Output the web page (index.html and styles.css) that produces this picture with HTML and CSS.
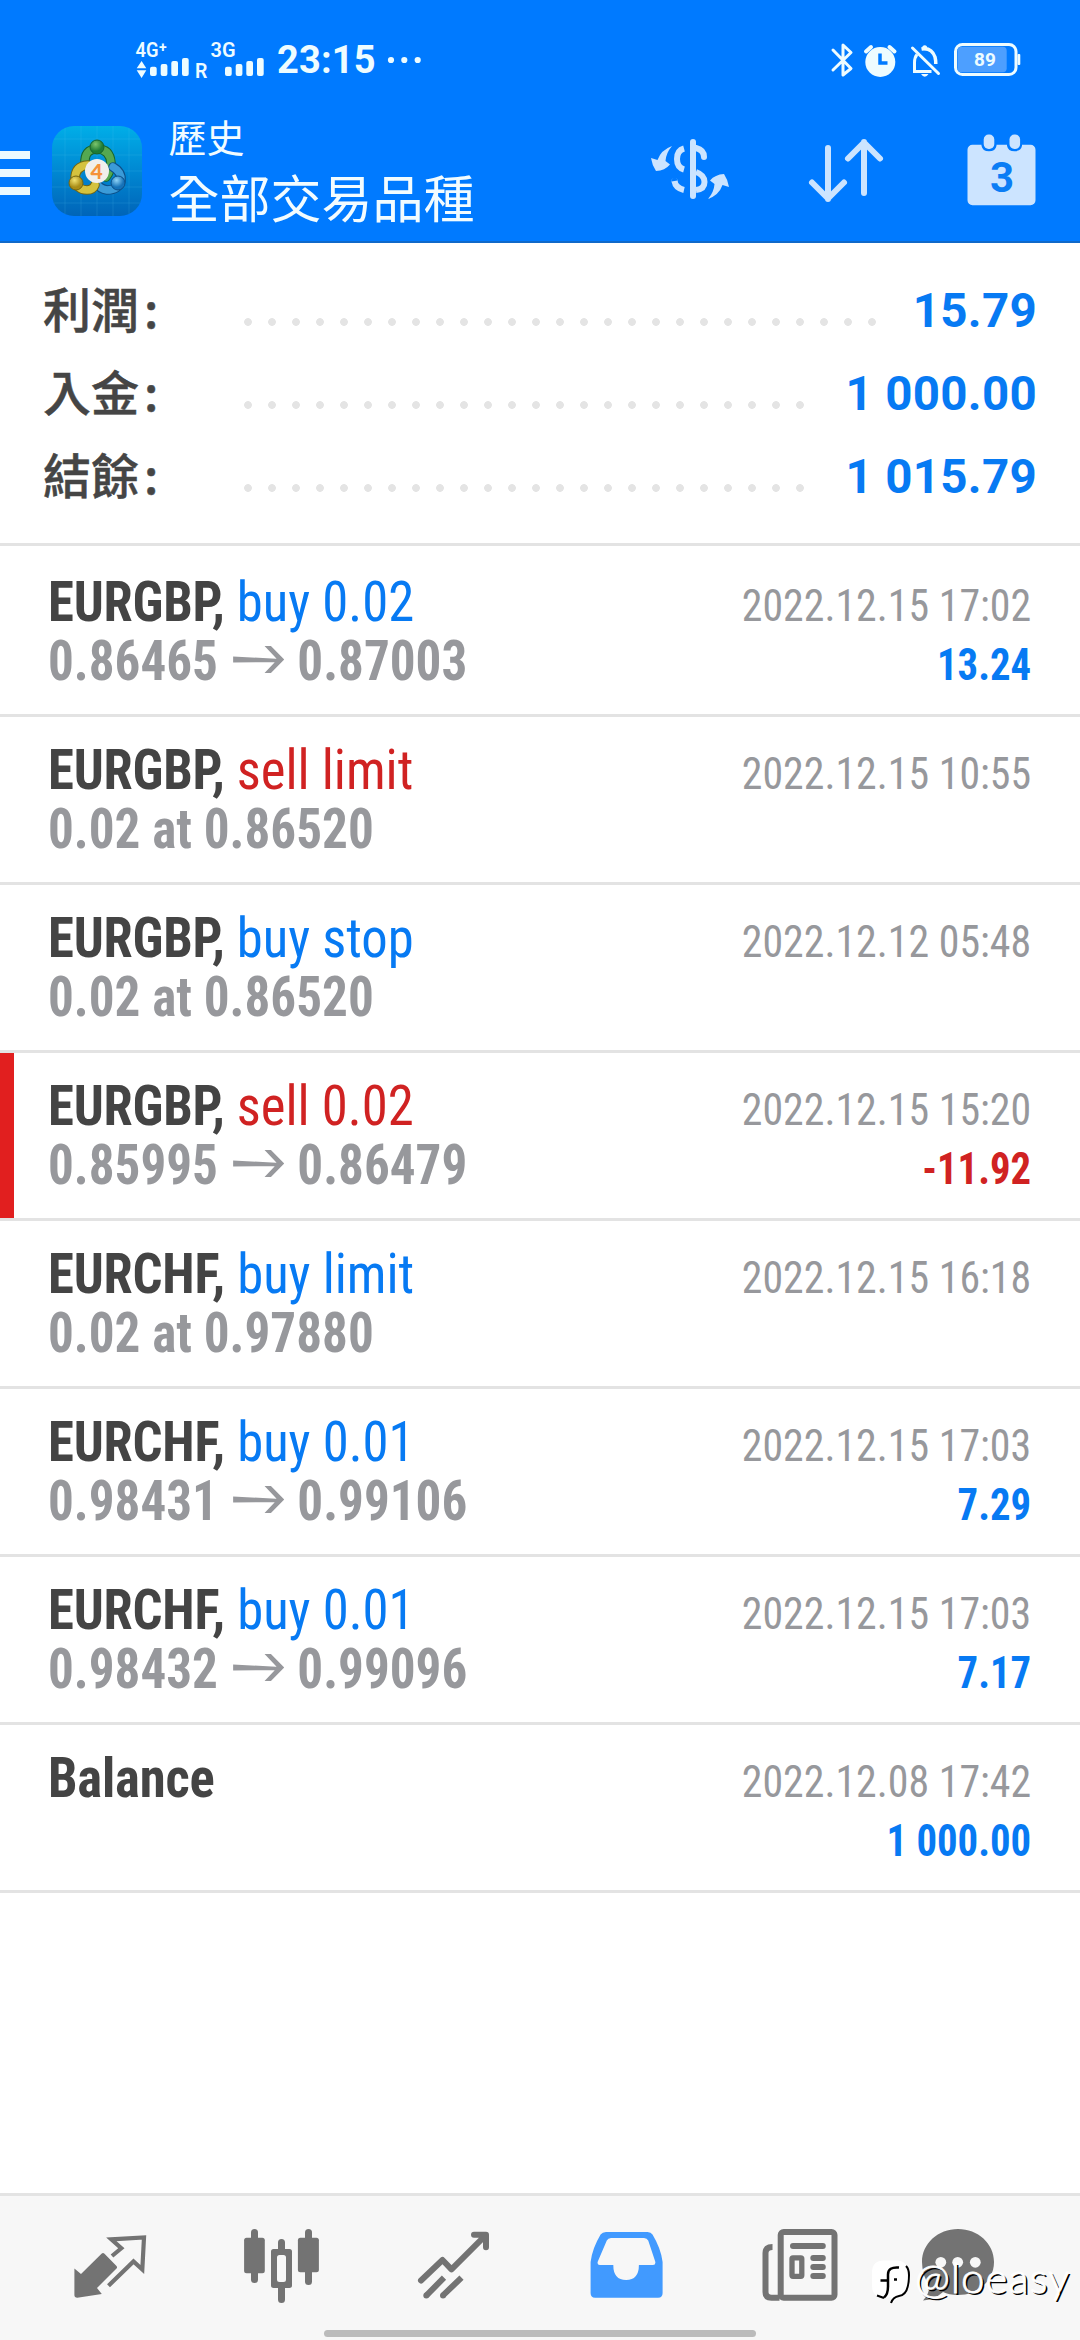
FILE: index.html
```html
<!DOCTYPE html>
<html lang="zh-Hant">
<head>
<meta charset="utf-8">
<title>歷史</title>
<link rel="stylesheet" href="styles.css">
</head>
<body>
<header class="top">
  <div class="status">
    <svg class="status-svg" viewBox="0 0 1080 104" width="1080" height="104">
      <g fill="#eefcff" font-family="Roboto, sans-serif">
        <text x="135.5" y="56.7" font-size="20" font-weight="600" textLength="23" lengthAdjust="spacingAndGlyphs">4G</text>
        <text x="159" y="52" font-size="14" font-weight="700">+</text>
        <text x="210.5" y="56.7" font-size="20" font-weight="600" textLength="25" lengthAdjust="spacingAndGlyphs">3G</text>
        <text x="195" y="77.5" font-size="19.5" font-weight="600">R</text>
        <path d="M136.7 68.3h9.6L141.6 61zM136.7 70.3h9.6L141.6 78z"/>
        <rect x="150" y="66.7" width="6.7" height="9.3" rx="2"/><rect x="160.7" y="64" width="6.7" height="12" rx="2"/><rect x="171.3" y="61" width="6.7" height="15" rx="2"/><rect x="182" y="58" width="6.7" height="18" rx="2"/>
        <rect x="225" y="66.7" width="6.7" height="9.3" rx="2"/><rect x="235.7" y="64" width="6.7" height="12" rx="2"/><rect x="246.3" y="61" width="6.7" height="15" rx="2"/><rect x="257" y="58" width="6.7" height="18" rx="2"/>
        <text x="277" y="73.3" font-size="38" font-weight="700" textLength="98.5" lengthAdjust="spacing">23:15</text>
        <circle cx="391" cy="60" r="3.1"/><circle cx="404.3" cy="60" r="3.1"/><circle cx="417.7" cy="60" r="3.1"/>
        <path d="M833 50l18 18.5-8 6.5V45l8 7.5L833 70" fill="none" stroke="#eefcff" stroke-width="3" stroke-linecap="round" stroke-linejoin="round"/>
        <circle cx="880.3" cy="62" r="15"/>
        <path d="M866 51.5l5-4.5M889.500 47l5 4.500" stroke="#eefcff" stroke-width="4" stroke-linecap="round"/>
        <path d="M880 53.500v9.500h7.500" fill="none" stroke="#007aff" stroke-width="3.500"/>
        <path d="M912.500 48l26 25.500" stroke="#eefcff" stroke-width="3" stroke-linecap="round"/>
        <path d="M917 54.500q-2.500 3-2.500 8V71.500h17" fill="none" stroke="#eefcff" stroke-width="3"/>
        <path d="M921.500 49q10-2 13.500 8 .8 3 .8 7" fill="none" stroke="#eefcff" stroke-width="3.500"/>
        <circle cx="924.700" cy="47.800" r="2.500"/>
        <path d="M921 74h7.500q-3.700 5.500-7.500 0z"/>
        <rect x="955.500" y="44.500" width="60.500" height="30" rx="7" fill="none" stroke="#eefcff" stroke-width="3"/>
        <rect x="957.500" y="46.700" width="49.200" height="25.500" rx="4" fill="#4d9fff"/>
        <rect x="1017.500" y="54" width="2.800" height="11" rx="1"/>
        <text x="985" y="66" font-size="19" font-weight="700" text-anchor="middle">89</text>
      </g>
    </svg>
  </div>
  <div class="bar">
    <div class="burger"><i></i><i></i><i></i></div>
    <svg class="logo" viewBox="0 0 90 90" width="90" height="90">
      <defs>
        <linearGradient id="bg" x1="0" y1="0" x2="0" y2="1"><stop offset="0" stop-color="#00aee8"/><stop offset=".5" stop-color="#0088d2"/><stop offset="1" stop-color="#0064b8"/></linearGradient>
        <radialGradient id="gg" cx=".4" cy=".3"><stop offset="0" stop-color="#7cc46c"/><stop offset="1" stop-color="#1e7c35"/></radialGradient>
        <radialGradient id="yg" cx=".4" cy=".3"><stop offset="0" stop-color="#f2e372"/><stop offset="1" stop-color="#a98d17"/></radialGradient>
        <radialGradient id="lg" cx=".4" cy=".3"><stop offset="0" stop-color="#8fd3f7"/><stop offset="1" stop-color="#1672b8"/></radialGradient>
      </defs>
      <rect width="90" height="90" rx="22" fill="url(#bg)"/>
      <path d="M13 2v86M29 0v90M45 0v90M61 0v90M77 2v86M2 13h86M0 29h90M0 45h90M0 61h90M2 77h86" stroke="#5cc4f4" stroke-opacity=".16" fill="none"/>
      <g fill="none" stroke-linecap="round">
        <path d="M33 38q-1-15 12-15t14 14q0 8-5 14" stroke="#17642c" stroke-width="9.500"/><path d="M33 38q-1-15 12-15t14 14q0 8-5 14" stroke="#54a851" stroke-width="7.500"/>
        <path d="M61 41q9 5 8 14-3 9-14 9-7-1-11-7" stroke="#0d4f88" stroke-width="9.500"/><path d="M61 41q9 5 8 14-3 9-14 9-7-1-11-7" stroke="#3b9bd8" stroke-width="7.500"/>
        <path d="M36 39q-13 1-13 14 2 11 12 11 6 0 8-5" stroke="#746510" stroke-width="9.500"/><path d="M36 39q-13 1-13 14 2 11 12 11 6 0 8-5" stroke="#d4c23e" stroke-width="7.500"/>
      </g>
      <circle cx="45" cy="21" r="7" fill="url(#gg)" stroke="#17642c"/>
      <circle cx="24" cy="57" r="7" fill="url(#yg)" stroke="#746510"/>
      <circle cx="66" cy="57" r="7" fill="url(#lg)" stroke="#0d4f88"/>
      <circle cx="45" cy="45" r="12" fill="#f1efec"/>
      <text x="44.500" y="52.500" text-anchor="middle" font-family="Lato, sans-serif" font-weight="900" font-size="21" fill="#f5923a">4</text>
    </svg>
    <div class="titles"><div class="t1">歷史</div><div class="t2">全部交易品種</div></div>
    <svg class="actions" viewBox="640 120 400 100" width="400" height="100">
      <g fill="none" stroke="#cce4ff" stroke-width="6" stroke-linecap="round" stroke-linejoin="round">
        <path d="M693 142v54"/>
        <path d="M696 148q8 2 8 9" /><path d="M684 148.500q-7 2-7 10.500t7 10.500" stroke-linecap="butt"/>
        <path d="M696 172q8.500 3 8.500 10t-8.500 8" stroke-linecap="butt"/><path d="M674.500 181q1 7 9.500 9" stroke-linecap="butt"/><circle cx="674.600" cy="181" r=".1"/>
        <path d="M828 148v51M812 182.500l16 16 16-16M864 193v-51M848 158.500l16-16 16 16"/>
      </g>
      <g fill="#cce4ff">
        <path d="M672 146q-6 7-6.500 15l4.500 3.500q-5 6-14 6.500-4-6-5-13l6.500 2q3.500-10 14.500-14z"/>
        <path d="M708 199q6-7 6.500-15l-4.500-3.500q5-6 14-6.500 4 6 5 13l-6.500-2q-3.500 10-14.500 14z"/>
        <path d="M973 144.700h8.500v1q1 5.500 7.500 5.500t7.500-5.500v-1h10.500v1q1 5.500 7.500 5.500t7.500-5.500v-1h8.500a5 5 0 0 1 5 5v50.500a5 5 0 0 1-5 5h-58a5 5 0 0 1-5-5v-50.500a5 5 0 0 1 5-5z"/>
        <rect x="983.700" y="134.500" width="10.600" height="14.500" rx="5"/><rect x="1009.500" y="134.500" width="10.600" height="14.500" rx="5"/>
      </g>
      <text x="1002" y="192" text-anchor="middle" font-family="Roboto, sans-serif" font-weight="700" font-size="42" fill="#0b7df5">3</text>
    </svg>
  </div>
</header>

<section class="summary">
  <div class="sum"><span class="lab">利潤<i>:</i></span><span class="dots"></span><span class="val">15.79</span></div>
  <div class="sum"><span class="lab">入金<i>:</i></span><span class="dots"></span><span class="val">1 000.00</span></div>
  <div class="sum"><span class="lab">結餘<i>:</i></span><span class="dots"></span><span class="val">1 015.79</span></div>
</section>

<main class="list">
  <div class="row"><div class="l"><p><b>EURGBP,</b> <span class="buy">buy 0.02</span></p><p class="px">0.86465 <svg class="to" viewBox="0 0 52 30" preserveAspectRatio="none"><path d="M0 11.500L48 14v3L0 17.500zM32 1h6.500L52 14.500 38.500 28H32L45 14.500z"/></svg> 0.87003</p></div><div class="r"><p class="date">2022.12.15 17:02</p><p class="amt">13.24</p></div></div>
  <div class="row"><div class="l"><p><b>EURGBP,</b> <span class="sell">sell limit</span></p><p class="px">0.02 at 0.86520</p></div><div class="r"><p class="date">2022.12.15 10:55</p></div></div>
  <div class="row"><div class="l"><p><b>EURGBP,</b> <span class="buy">buy stop</span></p><p class="px">0.02 at 0.86520</p></div><div class="r"><p class="date">2022.12.12 05:48</p></div></div>
  <div class="row loss"><div class="l"><p><b>EURGBP,</b> <span class="sell">sell 0.02</span></p><p class="px">0.85995 <svg class="to" viewBox="0 0 52 30" preserveAspectRatio="none"><path d="M0 11.500L48 14v3L0 17.500zM32 1h6.500L52 14.500 38.500 28H32L45 14.500z"/></svg> 0.86479</p></div><div class="r"><p class="date">2022.12.15 15:20</p><p class="amt neg">-11.92</p></div></div>
  <div class="row"><div class="l"><p><b>EURCHF,</b> <span class="buy">buy limit</span></p><p class="px">0.02 at 0.97880</p></div><div class="r"><p class="date">2022.12.15 16:18</p></div></div>
  <div class="row"><div class="l"><p><b>EURCHF,</b> <span class="buy">buy 0.01</span></p><p class="px">0.98431 <svg class="to" viewBox="0 0 52 30" preserveAspectRatio="none"><path d="M0 11.500L48 14v3L0 17.500zM32 1h6.500L52 14.500 38.500 28H32L45 14.500z"/></svg> 0.99106</p></div><div class="r"><p class="date">2022.12.15 17:03</p><p class="amt">7.29</p></div></div>
  <div class="row"><div class="l"><p><b>EURCHF,</b> <span class="buy">buy 0.01</span></p><p class="px">0.98432 <svg class="to" viewBox="0 0 52 30" preserveAspectRatio="none"><path d="M0 11.500L48 14v3L0 17.500zM32 1h6.500L52 14.500 38.500 28H32L45 14.500z"/></svg> 0.99096</p></div><div class="r"><p class="date">2022.12.15 17:03</p><p class="amt">7.17</p></div></div>
  <div class="row"><div class="l"><p><b>Balance</b></p></div><div class="r"><p class="date">2022.12.08 17:42</p><p class="amt">1 000.00</p></div></div>
</main>

<nav class="tabs">
  <svg viewBox="24 2196 172 144"><path fill="#737373" d="M74.400 2268.500l6.600 5.500 20.500-20.300q1.500-1.300 3 0l12 12.300q1.200 1.300 0 2.600L97 2288l4.800 6-24.500 3.700q-2.900 0-2.900-2.700z"/><path fill="none" stroke="#737373" stroke-width="4.200" d="M112 2256l9.300-7.700-10-9 32.700-1.800-1.700 32-8.800-8-25 24.200"/></svg>
  <svg viewBox="196 2196 172 144"><g fill="#737373"><rect x="244.100" y="2237.700" width="20.700" height="35.500" rx="2.500"/><rect x="251" y="2229" width="7" height="54" rx="3.500"/><path fill-rule="evenodd" d="M273.500 2249h16a2.500 2.500 0 0 1 2.500 2.500v34a2.500 2.500 0 0 1-2.500 2.500h-16a2.500 2.500 0 0 1-2.500-2.500v-34a2.500 2.500 0 0 1 2.500-2.500zM279.500 2255q-2.500 0-2.500 2.500v22q0 2.500 2.500 2.500h4q2.500 0 2.500-2.500v-22q0-2.500-2.500-2.500z"/><path d="M278 2250v-7.500a3.500 3.500 0 0 1 7 0v7.500zM278 2287v12.500a3.500 3.500 0 0 0 7 0V2287z"/><rect x="297.900" y="2237.700" width="21" height="34.600" rx="2.500"/><rect x="305" y="2229" width="7" height="56" rx="3.500"/></g></svg>
  <svg viewBox="368 2196 172 144"><path fill="none" stroke="#737373" stroke-width="6" stroke-linejoin="round" stroke-linecap="round" d="M421 2280.500l21.500-20.500 9 9.300 34-34M474 2234.800h12v12.500"/><path fill="none" stroke="#737373" stroke-width="6" d="M426.500 2295.300l17.500-17.600M443 2295.300l18.500-17.600"/><g fill="#737373"><circle cx="426.300" cy="2295.400" r="3"/><circle cx="443" cy="2295.400" r="3"/></g></svg>
  <svg viewBox="540 2196 172 144"><path fill="#419aff" fill-rule="evenodd" d="M606 2232h41.500q3.500 0 5 2.500 8.500 14 10.100 27.500v31q0 4.700-4.500 4.700h-63q-4.500 0-4.500-4.700v-31q1.600-13.500 10-27.500 1.900-2.500 5.400-2.500zM611 2238q-3 0-4.200 2.500l-9 21q-1 3.500 2 3.500h13.500q0 15 12.800 15t12.800-15H653q3 0 2.200-3.500l-7-21q-1.200-2.500-4.200-2.500z"/></svg>
  <svg viewBox="712 2196 172 144"><g fill="none" stroke="#737373" stroke-width="6"><rect x="780.700" y="2232" width="53.800" height="65.700" rx="3"/><path d="M772.500 2247q-7 0-7 6v39q0 5.700 6 5.700h8"/></g><g fill="#737373"><rect x="790" y="2243" width="35.800" height="6" rx="3"/><rect x="810.300" y="2255" width="15.500" height="6" rx="3"/><rect x="810.300" y="2264" width="15.500" height="6" rx="3"/><rect x="810.300" y="2273" width="15.500" height="6" rx="3"/></g><rect x="792" y="2257.800" width="9.800" height="18.500" rx="1" fill="none" stroke="#737373" stroke-width="5.300"/></svg>
  <svg viewBox="884 2196 172 144"><path fill="#737373" d="M958 2229c20 0 36 14.500 36 33s-16 33-36 33q-9 0-15-3-9 8-20 8.500 6-6 6.500-14.500-7.500-11-7.500-24c0-18.500 16-33 36-33z"/><g fill="#f7f7f7"><circle cx="940.800" cy="2262.300" r="5.400"/><circle cx="957.700" cy="2262.300" r="5.400"/><circle cx="975.300" cy="2262.300" r="5.400"/></g></svg>
  <div class="home"></div>
  <svg class="mark" viewBox="868 2250 212 66"><path fill="#fff" d="M884 2260.500h12q12 0 12 12v12q0 12-10 13l-5 5-2-5h-7q-12 0-12-12v-13q0-12 12-12z"/><path fill="none" stroke="#000" stroke-width="2.500" d="M899 2267.500q-11-1-11 7v12q0 8-4 11M880.500 2280.500h8M894 2279.500h3"/><path fill="none" stroke="#000" stroke-width="2" d="M906 2266q3 3 3 9 0 20-10 21-6 1-8 7M877 2295.500l7 2.500"/><g font-family="Lato, sans-serif" font-weight="300" font-size="42"><text x="917" y="2294.500" textLength="154" fill="#000">@loeasy</text><text x="915" y="2292.500" textLength="154" fill="#fff" stroke="#fff" stroke-width=".8">@loeasy</text></g></svg>
</nav>
</body>
</html>
```
FILE: styles.css
```css
* { box-sizing: border-box; }
body { margin: 0; width: 1080px; height: 2340px; background: #fff; font-family: Roboto, "Noto Sans CJK TC", sans-serif; display: flex; flex-direction: column; overflow: hidden; position: relative; }
p { margin: 0; white-space: nowrap; }
.top { height: 243px; background: #007aff; border-bottom: 2px solid #1169c9; }
.status { height: 104px; }
.status-svg { display: block; }
.bar { height: 137px; display: flex; align-items: flex-start; }
.burger { width: 30px; margin: 47px 21.500px 0 0; display: flex; flex-direction: column; gap: 10px; }
.burger i { height: 8px; background: #ebf9ff; }
.logo { margin-top: 22px; }
.titles { margin-left: 27px; width: 443.500px; color: #f2fcff; font-family: "Noto Sans CJK TC", sans-serif; white-space: nowrap; }
.t1 { font-size: 38px; line-height: 52px; margin-top: 6px; }
.t2 { font-size: 51px; line-height: 68px; }
.actions { margin-top: 16px; margin-left: 28px; flex: none; }

.summary { height: 303px; padding: 25px 43px 0 43px; border-bottom: 3px solid #e3e3e3; }
.sum { height: 83px; display: flex; align-items: center; }
.lab { width: 193px; margin-top: -5px; font: 500 48px/83px "Noto Sans CJK TC", sans-serif; color: #454545; -webkit-text-stroke: .5px #454545; }
.lab i { font-style: normal; margin-left: 5px; }
.dots { flex: 1; height: 83px; margin-right: 29px; background: radial-gradient(circle at 12px 54px, #e4e4e4 3.500px, transparent 4.200px) 0 0 / 24px 83px repeat-x; }
.val { font-size: 47.500px; font-weight: 670; letter-spacing: .3px; color: #077af3; padding-top: 3px; }

.list { padding-top: 3px; font-family: "Roboto Condensed", Roboto, sans-serif; font-stretch: 75%; flex: 1; }
.row { height: 168px; border-bottom: 3px solid #e3e3e3; padding: 24px 49px 0 48px; display: flex; justify-content: space-between; }
.row.loss { box-shadow: inset 14px 0 #e11f1f; }
.row p { font-size: 55px; line-height: 59px; height: 59px; }
.l p { transform: scaleX(.958); transform-origin: left; }
.row b { color: #444; font-weight: 700; letter-spacing: -.2px; }
.row .px { color: #97989c; font-weight: 700; transform: scaleX(.93); }
.r { padding-top: 3px; }
.row .date, .row .amt { font-size: 45px; text-align: right; transform-origin: right; }
.row .date { color: #97989c; transform: scaleX(.93); }
.row .amt { color: #077af3; font-weight: 700; transform: scaleX(.905); }
.buy { color: #077af3; }
.row .sell, .row .neg { color: #d02222; }
.to { width: 55px; height: 30px; fill: #97989c; vertical-align: 5px; margin: 0 1px 0 4px; }

.tabs { position: relative; height: 147px; border-top: 3px solid #e3e3e3; background: #f7f7f7; display: flex; padding-left: 24px; }
.tabs > svg { width: 172px; height: 144px; flex: none; }
.home { position: absolute; left: 324px; top: 134px; width: 432px; height: 7px; border-radius: 4px; background: #bbb; }
.tabs .mark { position: absolute; left: 868px; top: 54px; width: 212px; height: 66px; }
```
